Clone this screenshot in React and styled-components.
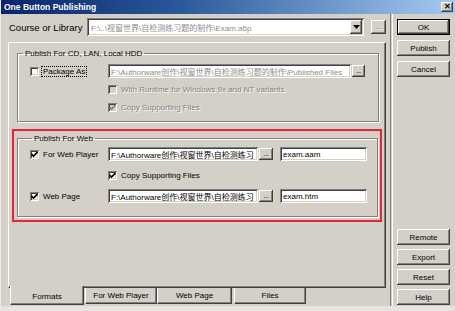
import React from 'react'
import styled, { createGlobalStyle } from 'styled-components'

const GlobalStyle = createGlobalStyle`
  html, body {
    margin: 0;
    padding: 0;
    background: #d4d0c8;
  }
  body {
    font-family: "Liberation Sans", Arial, "Noto Sans CJK SC", sans-serif;
    font-size: 8px;
    color: #000;
  }
`

const Window = styled.div`
  width: 455px;
  height: 311px;
  box-sizing: border-box;
  background: #d4d0c8;
  border-left: 1px solid #ecebe6;
  border-bottom: 5px solid #e6e4df;
  display: flex;
  flex-direction: column;
  overflow: hidden;
`

const TitleBar = styled.div`
  height: 14px;
  flex: none;
  display: flex;
  align-items: center;
  justify-content: space-between;
  padding: 0 2px 0 3px;
  background: linear-gradient(to right, #0a246a 0%, #2b5a9c 40%, #a6caf0 100%);
  color: #fff;
  font-weight: bold;
  font-size: 8.5px;
`

const CloseBox = styled.div`
  width: 12px;
  height: 10px;
  background: #d4d0c8;
  box-shadow: inset -1px -1px #404040, inset 1px 1px #fff, inset -2px -2px #808080;
  color: #000;
  font-size: 8px;
  line-height: 10px;
  text-align: center;
`

const Body = styled.div`
  flex: 1;
  display: flex;
  padding: 0 5px 0 7px;
  min-height: 0;
`

const LeftColumn = styled.div`
  width: 378px;
  display: flex;
  flex-direction: column;
`

const Separator = styled.div`
  width: 1px;
  margin: 0 4px;
  border-left: 1px solid #808080;
  border-right: 1px solid #fff;
`

const RightColumn = styled.div`
  width: 54px;
  display: flex;
  flex-direction: column;
  justify-content: space-between;
  padding: 5px 0 1px;
`

const ButtonStack = styled.div`
  display: flex;
  flex-direction: column;
  gap: ${p => p.gap}px;
`

const Button = styled.div`
  height: ${p => (p.$default ? 14 : 16)}px;
  display: flex;
  align-items: center;
  justify-content: center;
  background: #d4d0c8;
  border: ${p => (p.$default ? '1px solid #000' : 'none')};
  box-shadow: inset -1px -1px #404040, inset 1px 1px #fff, inset -2px -2px #808080;
  color: ${p => (p.disabled ? '#808080' : '#000')};
  text-shadow: ${p => (p.disabled ? '1px 1px #fff' : 'none')};
`

const TopRow = styled.div`
  margin-top: 4px;
  height: 18px;
  display: flex;
  align-items: center;
`

const RowLabel = styled.span`
  width: 78px;
  padding-left: 1px;
  font-size: 9.5px;
  white-space: nowrap;
`

const Combo = styled.div`
  width: 277px;
  height: 18px;
  box-sizing: border-box;
  display: flex;
  align-items: center;
  background: #fff;
  box-shadow: inset 1px 1px #808080, inset -1px -1px #fff, inset 2px 2px #404040, inset -2px -2px #d4d0c8;
  padding: 0 2px 0 4px;
`

const FieldText = styled.span`
  flex: 1;
  min-width: 0;
  overflow: hidden;
  white-space: nowrap;
  font-size: 8px;
  color: ${p => (p.disabled ? '#8c8c8c' : '#000')};
`

const ComboArrow = styled.div`
  width: 12px;
  height: 14px;
  display: flex;
  align-items: center;
  justify-content: center;
  background: #d4d0c8;
  box-shadow: inset -1px -1px #404040, inset 1px 1px #fff, inset -2px -2px #808080;
`

const SmallButton = styled(Button)`
  width: ${p => p.w}px;
  height: ${p => p.h}px;
  margin-left: ${p => p.gapLeft || 0}px;
  flex: none;
  font-size: ${p => p.size || 7}px;
  line-height: normal;
  letter-spacing: -0.5px;
  padding-bottom: 2px;
  box-sizing: border-box;
  overflow: hidden;
`

const Panel = styled.div`
  margin-top: 6px;
  height: 246px;
  box-sizing: border-box;
  border-top: 1px solid #fff;
  border-left: 1px solid #fff;
  border-right: 1px solid #404040;
  border-bottom: 1px solid #404040;
  box-shadow: inset -1px -1px #808080;
  padding: 0 8px;
`

const Group = styled.fieldset`
  margin: ${p => p.top}px 0 0;
  padding: 0 10px ${p => p.bottom}px 12px;
  border: 1px solid #808080;
  box-shadow: 1px 1px #fff, inset 1px 1px #fff;
  display: flex;
  flex-direction: column;
  gap: ${p => p.gap}px;
`

const Legend = styled.legend`
  padding: 0 2px;
  margin-left: ${p => p.offset}px;
  line-height: 11px;
  font-size: 8px;
`

const Highlight = styled.div`
  margin: 7px -5px 0;
  border: 2px solid #d42e3e;
  box-shadow: inset 0 0 0 1px #f2b6bc;
  padding: 2px 3px 3px;
`

const Row = styled.div`
  height: 14px;
  display: flex;
  align-items: center;
  margin-top: ${p => p.top || 0}px;
`

const CheckCell = styled.div`
  width: ${p => p.w || 78}px;
  flex: none;
  display: flex;
  align-items: center;
  gap: 3px;
  margin-left: ${p => p.indent || 0}px;
`

const Box = styled.div`
  width: 9px;
  height: 9px;
  flex: none;
  box-sizing: border-box;
  background: ${p => (p.disabled ? '#d4d0c8' : '#fff')};
  box-shadow: inset 1px 1px #808080, inset -1px -1px #fff, inset 2px 2px #404040, inset -2px -2px #d4d0c8;
  display: flex;
  align-items: center;
  justify-content: center;
`

const CheckLabel = styled.span`
  white-space: nowrap;
  padding: 0 1px;
  outline: ${p => (p.focused ? '1px dotted #000' : 'none')};
  color: ${p => (p.disabled ? '#808080' : '#000')};
  text-shadow: ${p => (p.disabled ? '1px 1px #fff' : 'none')};
`

const TextField = styled.div`
  width: ${p => p.w}px;
  height: ${p => p.h || 14}px;
  flex: none;
  box-sizing: border-box;
  display: flex;
  align-items: center;
  padding: 0 2px 0 3px;
  margin-left: ${p => p.gapLeft || 0}px;
  background: #fff;
  box-shadow: inset 1px 1px #808080, inset -1px -1px #fff, inset 2px 2px #404040, inset -2px -2px #d4d0c8;
`

const TabStrip = styled.div`
  display: flex;
  padding-left: 2px;
  height: 17px;
`

const Tab = styled.div`
  width: ${p => p.w}px;
  margin-left: ${p => p.gapLeft || 0}px;
  box-sizing: border-box;
  display: flex;
  align-items: center;
  justify-content: center;
  background: #d4d0c8;
  border-left: 1px solid #fff;
  border-right: 1px solid #404040;
  border-bottom: 1px solid #404040;
  box-shadow: inset -1px -1px #808080;
  height: ${p => (p.active ? 19 : 16)}px;
  margin-top: ${p => (p.active ? -2 : 0)}px;
  padding-top: ${p => (p.active ? 2 : 0)}px;
  position: relative;
`

function Check({ checked, disabled }) {
  return (
    <Box disabled={disabled}>
      {checked && (
        <svg width="7" height="7" viewBox="0 0 7 7">
          <path d="M0.5 3 L2.5 5 L6.5 1" fill="none" stroke={disabled ? '#808080' : '#000'} strokeWidth="1.6" />
        </svg>
      )}
    </Box>
  )
}

function CheckItem({ label, checked, disabled, focused, w, indent }) {
  return (
    <CheckCell w={w} indent={indent}>
      <Check checked={checked} disabled={disabled} />
      <CheckLabel disabled={disabled} focused={focused}>{label}</CheckLabel>
    </CheckCell>
  )
}

export default function App() {
  return (
    <Window>
      <GlobalStyle />
      <TitleBar>
        <span>One Button Publishing</span>
        <CloseBox>✕</CloseBox>
      </TitleBar>
      <Body>
        <LeftColumn>
          <TopRow>
            <RowLabel>Course or Library</RowLabel>
            <Combo>
              <FieldText disabled>F:\..\视窗世界\自检测练习题的制作\Exam.a6p</FieldText>
              <ComboArrow>
                <svg width="7" height="4" viewBox="0 0 7 4">
                  <path d="M0 0 H7 L3.5 4 Z" fill="#000" />
                </svg>
              </ComboArrow>
            </Combo>
            <SmallButton w={15} h={14} gapLeft={7} size={8} disabled>...</SmallButton>
          </TopRow>

          <Panel>
            <Group top={5} bottom={7} gap={4}>
              <Legend offset={-7}>Publish For CD, LAN, Local HDD</Legend>
              <Row top={5}>
                <CheckItem label="Package As" focused />
                <TextField w={243}>
                  <FieldText disabled>F:\Authorware创作\视窗世界\自检测练习题的制作\Published Files</FieldText>
                </TextField>
                <SmallButton w={13} h={12} gapLeft={1}>...</SmallButton>
              </Row>
              <Row>
                <CheckItem w={260} label="With Runtime for Windows 9x and NT variants" disabled indent={78} />
              </Row>
              <Row>
                <CheckItem w={200} label="Copy Supporting Files" checked disabled indent={78} />
              </Row>
            </Group>

            <Highlight>
              <Group top={0} bottom={13} gap={7}>
                <Legend offset={2}>Publish For Web</Legend>
                <Row top={3}>
                  <CheckItem label="For Web Player" checked />
                  <TextField w={150}>
                    <FieldText>F:\Authorware创作\视窗世界\自检测练习</FieldText>
                  </TextField>
                  <SmallButton w={14} h={12} gapLeft={1}>...</SmallButton>
                  <TextField w={87} gapLeft={7}>
                    <FieldText>exam.aam</FieldText>
                  </TextField>
                </Row>
                <Row>
                  <CheckItem w={200} label="Copy Supporting Files" checked indent={78} />
                </Row>
                <Row>
                  <CheckItem label="Web Page" checked />
                  <TextField w={150}>
                    <FieldText>F:\Authorware创作\视窗世界\自检测练习</FieldText>
                  </TextField>
                  <SmallButton w={14} h={12} gapLeft={1}>...</SmallButton>
                  <TextField w={87} gapLeft={7}>
                    <FieldText>exam.htm</FieldText>
                  </TextField>
                </Row>
              </Group>
            </Highlight>
          </Panel>

          <TabStrip>
            <Tab w={74} active>Formats</Tab>
            <Tab w={72} gapLeft={1}>For Web Player</Tab>
            <Tab w={75}>Web Page</Tab>
            <Tab w={72} gapLeft={2}>Files</Tab>
          </TabStrip>
        </LeftColumn>

        <Separator />

        <RightColumn>
          <ButtonStack gap={5}>
            <Button $default>OK</Button>
            <Button>Publish</Button>
            <Button>Cancel</Button>
          </ButtonStack>
          <ButtonStack gap={4}>
            <Button>Remote</Button>
            <Button>Export</Button>
            <Button>Reset</Button>
            <Button>Help</Button>
          </ButtonStack>
        </RightColumn>
      </Body>
    </Window>
  )
}
